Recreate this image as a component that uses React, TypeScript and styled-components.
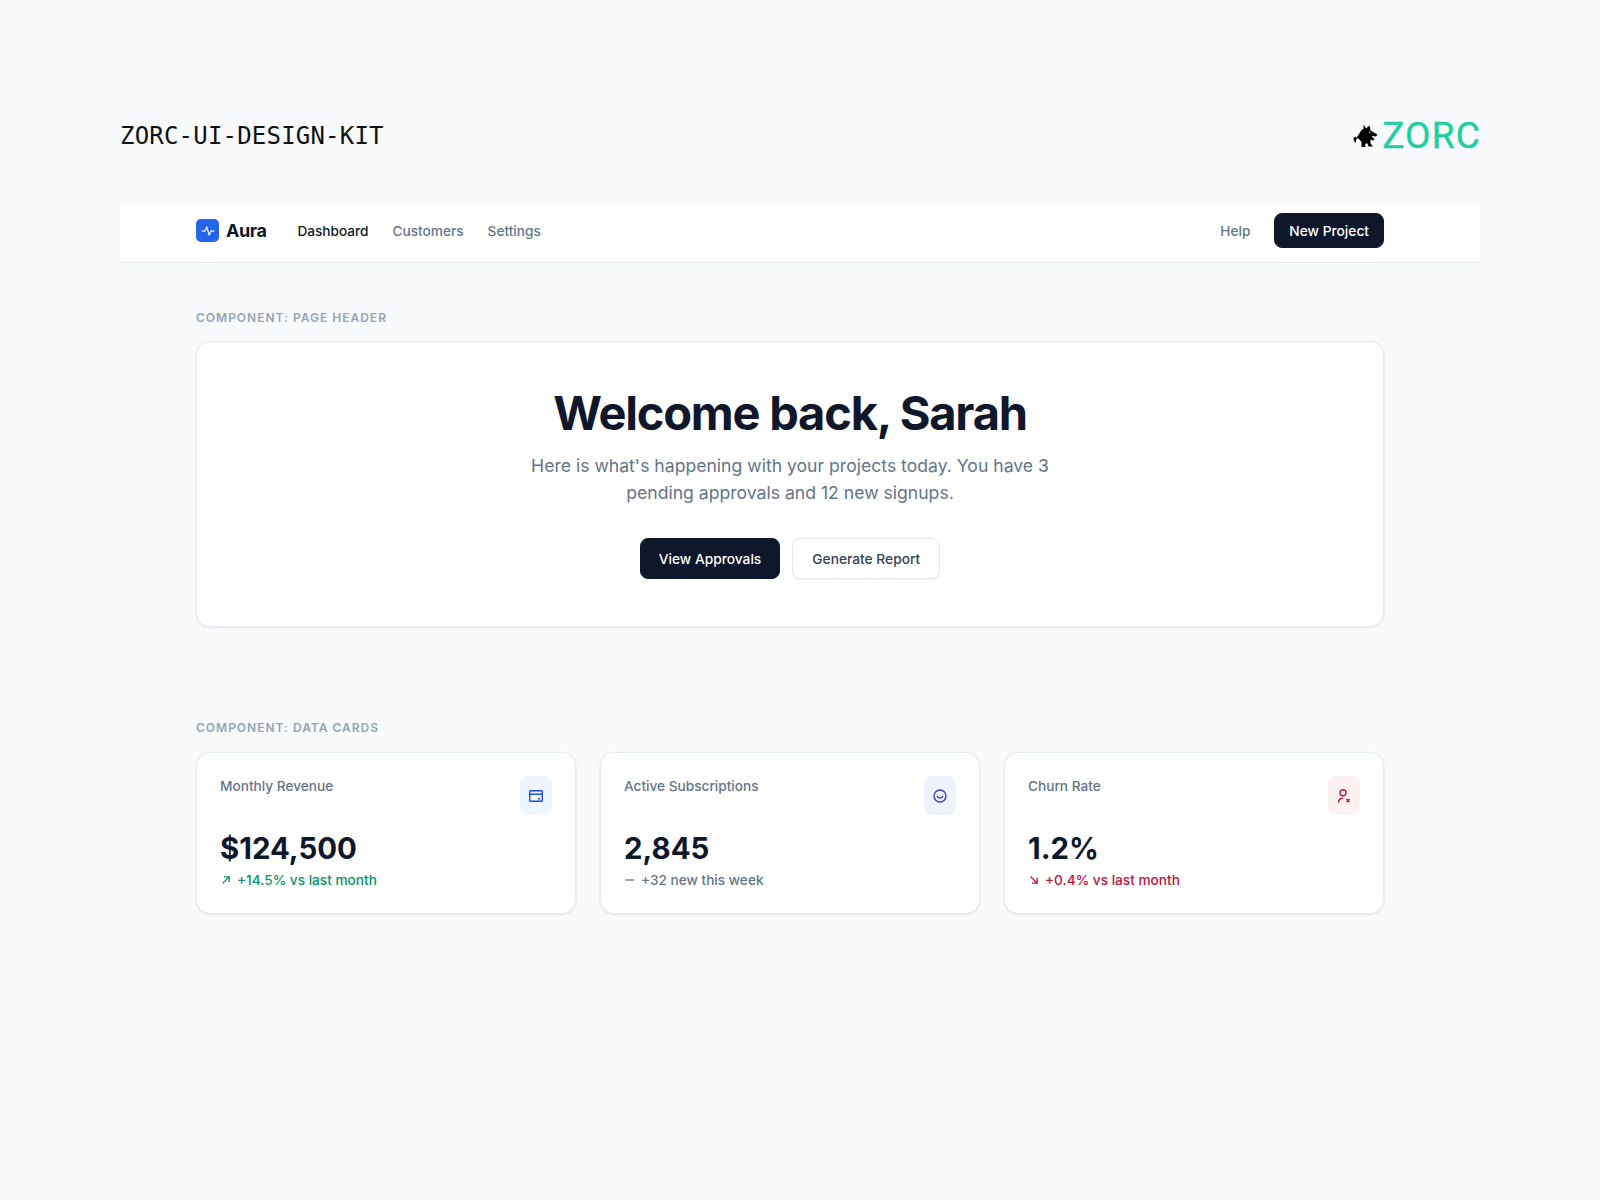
import React from "react";
import styled, { createGlobalStyle } from "styled-components";

const Global = createGlobalStyle`
  html, body { margin: 0; padding: 0; background: #f8fafc; }
  body { font-family: Inter, "Noto Sans", sans-serif; color: #0f172a; }
  * { box-sizing: border-box; }
`;

const Page = styled.div`
  width: 1360px;
  margin: 0 auto;
  padding: 120px 0 286px;
`;

const KitHeader = styled.header`
  height: 32px;
  margin-bottom: 52px;
  display: flex;
  align-items: center;
  justify-content: space-between;
`;

const KitTitle = styled.h1`
  margin: 0;
  font-family: "DejaVu Sans Mono", "Liberation Mono", monospace;
  font-size: 24px;
  font-weight: 400;
  letter-spacing: 0.2px;
  color: #111;
`;

const Brand = styled.div`
  display: flex;
  align-items: center;
  gap: 3px;
`;

const BrandWord = styled.span`
  font-family: Roboto, "Liberation Sans", sans-serif;
  font-size: 37px;
  line-height: 30px;
  letter-spacing: 1.2px;
  margin-right: -1px;
  -webkit-text-stroke: 0.4px #1fcf9f;
  color: #1fcf9f;
`;

const Nav = styled.nav`
  height: 59px;
  padding: 9px 96px 14px 76px;
  background: #fff;
  border-bottom: 1px solid #e2e8f0;
  display: flex;
  align-items: center;
  justify-content: space-between;
`;

const NavGroup = styled.div`
  display: flex;
  align-items: center;
  gap: 24px;
`;

const Logo = styled.div`
  display: flex;
  align-items: center;
  gap: 7px;
  margin-right: 7px;
`;

const LogoMark = styled.div`
  width: 23px;
  height: 23px;
  border-radius: 5px;
  background: #2563eb;
  display: flex;
  align-items: center;
  justify-content: center;
`;

const LogoName = styled.span`
  font-size: 18px;
  font-weight: 700;
  letter-spacing: -0.45px;
`;

const NavLink = styled.a<{ $active?: boolean }>`
  font-size: 13.65px;
  font-weight: 500;
  color: ${(p) => (p.$active ? "#0f172a" : "#64748b")};
`;

const Button = styled.button<{ $variant: "dark" | "light"; $size: "sm" | "md" }>`
  font-family: inherit;
  font-size: 13.75px;
  font-weight: 500;
  height: ${(p) => (p.$size === "sm" ? "35px" : "41px")};
  padding: 0 ${(p) => (p.$size === "sm" ? "14px" : p.$variant === "dark" ? "18px" : "19px")};
  border-radius: 8px;
  cursor: pointer;
  ${(p) =>
    p.$variant === "dark"
      ? "background:#0f172a;color:#fff;border:1px solid #0f172a;"
      : "background:#fff;color:#334155;border:1px solid #e2e8f0;box-shadow:0 1px 2px rgba(15,23,42,.06);"}
`;

const Main = styled.main`
  margin: 0 96px 0 76px;
  padding-top: 47px;
`;

const Section = styled.section`
  margin-bottom: 93px;
`;

const SectionLabel = styled.div`
  font-size: 12px;
  line-height: 16px;
  font-weight: 600;
  letter-spacing: 1px;
  text-transform: uppercase;
  color: #94a3b8;
  margin-bottom: 15px;
`;

const Hero = styled.div`
  height: 286px;
  padding-top: 47px;
  background: #fff;
  border: 1px solid #e5eaf0;
  border-radius: 14px;
  box-shadow: 0 1px 3px rgba(15, 23, 42, 0.08);
  display: flex;
  flex-direction: column;
  align-items: center;
`;

const HeroTitle = styled.h2`
  margin: 0 0 15px;
  font-size: 47px;
  line-height: 48px;
  font-weight: 700;
  letter-spacing: -1.2px;
  color: #0f172a;
`;

const HeroText = styled.p`
  margin: 0 0 32px;
  max-width: 560px;
  font-size: 17.6px;
  line-height: 27px;
  text-align: center;
  color: #64748b;
`;

const HeroActions = styled.div`
  display: flex;
  gap: 12px;
`;

const CardGrid = styled.div`
  display: grid;
  grid-template-columns: repeat(3, 1fr);
  gap: 24px;
  margin-top: 16px;
`;

const Card = styled.article`
  height: 162px;
  padding: 23px;
  background: #fff;
  border: 1px solid #e5eaf0;
  border-radius: 14px;
  box-shadow: 0 1px 3px rgba(15, 23, 42, 0.08);
`;

const CardTop = styled.div`
  display: flex;
  justify-content: space-between;
  align-items: flex-start;
  margin-bottom: 16px;
`;

const CardLabel = styled.div`
  font-size: 13.65px;
  line-height: 20px;
  font-weight: 500;
  color: #64748b;
`;

const IconBox = styled.div<{ $bg: string; $fg: string }>`
  width: 32px;
  height: 39px;
  border-radius: 8px;
  background: ${(p) => p.$bg};
  color: ${(p) => p.$fg};
  display: flex;
  align-items: center;
  justify-content: center;
`;

const CardValue = styled.div`
  font-size: 29.4px;
  line-height: 36px;
  font-weight: 700;
  color: #0f172a;
`;

const Delta = styled.div<{ $color: string }>`
  margin-top: 3px;
  display: flex;
  align-items: center;
  gap: 5px;
  font-size: 13.65px;
  line-height: 20px;
  font-weight: 500;
  color: ${(p) => p.$color};
`;

const DeltaIcon = styled.svg`
  width: 12px;
  height: 12px;
  flex: none;
`;

const Wolf = () => (
  <svg width="26" height="24" viewBox="0 0 26 24" aria-hidden="true">
    <path
      fill="#000"
      d="M10.500.5l2.500 4 3.500-3 1 5 7 4-1.500 2-4.500-.5 3 3.500-1.500 1-2.500-1v4l2.500 3h-4.500l-1-3h-2l-.5 2.500 1.500 1h-5v-5l-2-2.500-2-1.500-1.500 2v3l-2-2-.5-2.500 1.500-2 1.500 1.500L6 10l2.500-4 2-1z"
    />
    <circle cx="16.800" cy="8.300" r=".7" fill="#fff" />
  </svg>
);

const Pulse = () => (
  <svg width="14" height="14" viewBox="0 0 24 24" fill="none" stroke="#dbeafe" strokeWidth="2.400" strokeLinecap="round" strokeLinejoin="round">
    <path d="M2 12h5l3-7 4 14 3-7h5" />
  </svg>
);

const stroke = { fill: "none", stroke: "currentColor", strokeWidth: 1.4 };

const CardIcon = () => (
  <svg width="16" height="16" viewBox="0 0 16 16" {...stroke}>
    <rect x="1.700" y="2.700" width="12.600" height="10.600" rx=".8" />
    <path d="M1.700 6.300h12.600M10 10.700h2" />
  </svg>
);

const SmileIcon = () => (
  <svg width="16" height="16" viewBox="0 0 16 16" {...stroke}>
    <circle cx="8" cy="8" r="6" />
    <path d="M5.200 8.300c.8 2.200 4.800 2.200 5.600 0" strokeLinecap="round" />
  </svg>
);

const UserXIcon = () => (
  <svg width="16" height="16" viewBox="0 0 16 16" {...stroke}>
    <circle cx="7" cy="4.700" r="3" />
    <path d="M2.500 14c.3-2.300 1.700-3.600 4-3.700" strokeLinecap="round" />
    <path d="M10.500 11l3 3M13.500 11l-3 3" strokeWidth="1.500" />
  </svg>
);

const UpArrow = () => (
  <DeltaIcon viewBox="0 0 12 12" fill="none" stroke="currentColor" strokeWidth="1.300">
    <path d="M2.500 9.500L9 3M4 2.800h5.200V8" />
  </DeltaIcon>
);

const DashIcon = () => (
  <DeltaIcon viewBox="0 0 12 12" fill="none" stroke="currentColor" strokeWidth="1.300">
    <path d="M1.500 6h8.500" />
  </DeltaIcon>
);

const DownArrow = () => (
  <DeltaIcon viewBox="0 0 12 12" fill="none" stroke="currentColor" strokeWidth="1.300">
    <path d="M2.500 2.500L9 9M9.200 4v5.200H4" />
  </DeltaIcon>
);

const cards = [
  { label: "Monthly Revenue", value: "$124,500", delta: "+14.5% vs last month", color: "#059669", bg: "#eff6ff", fg: "#1d4ed8", icon: <CardIcon />, arrow: <UpArrow /> },
  { label: "Active Subscriptions", value: "2,845", delta: "+32 new this week", color: "#64748b", bg: "#eef2ff", fg: "#4338ca", icon: <SmileIcon />, arrow: <DashIcon /> },
  { label: "Churn Rate", value: "1.2%", delta: "+0.4% vs last month", color: "#be123c", bg: "#fff1f2", fg: "#be123c", icon: <UserXIcon />, arrow: <DownArrow /> },
];

export default function App() {
  return (
    <Page>
      <Global />
      <KitHeader>
        <KitTitle>ZORC-UI-DESIGN-KIT</KitTitle>
        <Brand>
          <Wolf />
          <BrandWord>ZORC</BrandWord>
        </Brand>
      </KitHeader>
      <Nav>
        <NavGroup>
          <Logo>
            <LogoMark>
              <Pulse />
            </LogoMark>
            <LogoName>Aura</LogoName>
          </Logo>
          <NavLink $active>Dashboard</NavLink>
          <NavLink>Customers</NavLink>
          <NavLink>Settings</NavLink>
        </NavGroup>
        <NavGroup>
          <NavLink>Help</NavLink>
          <Button $variant="dark" $size="sm">New Project</Button>
        </NavGroup>
      </Nav>
      <Main>
        <Section>
          <SectionLabel>Component: Page Header</SectionLabel>
          <Hero>
            <HeroTitle>Welcome back, Sarah</HeroTitle>
            <HeroText>Here is what's happening with your projects today. You have 3 pending approvals and 12 new signups.</HeroText>
            <HeroActions>
              <Button $variant="dark" $size="md">View Approvals</Button>
              <Button $variant="light" $size="md">Generate Report</Button>
            </HeroActions>
          </Hero>
        </Section>
        <section>
          <SectionLabel>Component: Data Cards</SectionLabel>
          <CardGrid>
            {cards.map((c) => (
              <Card key={c.label}>
                <CardTop>
                  <CardLabel>{c.label}</CardLabel>
                  <IconBox $bg={c.bg} $fg={c.fg}>{c.icon}</IconBox>
                </CardTop>
                <CardValue>{c.value}</CardValue>
                <Delta $color={c.color}>
                  {c.arrow}
                  {c.delta}
                </Delta>
              </Card>
            ))}
          </CardGrid>
        </section>
      </Main>
    </Page>
  );
}
